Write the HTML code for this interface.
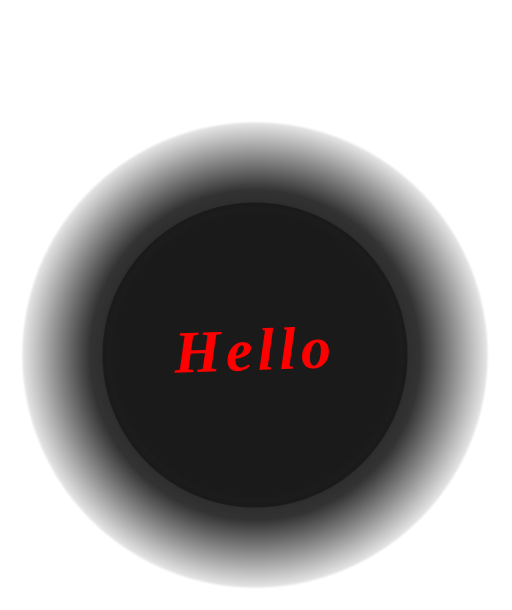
<!DOCTYPE html>
<html><head><style>
html,body{margin:0;padding:0;}
body{width:512px;height:610px;overflow:hidden;background:
radial-gradient(circle at 255px 355px,#1a1a1a 0,#1a1a1a 140px,#1c1c1c 146px,#1a1a1a 152px,#2e2e2e 153px,#333 165px,#5a5a5a 180px,#8a8a8a 198px,#b8b8b8 215px,#e2e2e2 231px,#fff 234px,#fff 100%);
position:relative;font-family:"Liberation Serif",serif;}
.t{position:absolute;left:160px;top:315px;width:190px;text-align:center;color:#f00;font-style:italic;font-weight:bold;font-size:60px;letter-spacing:5px;line-height:70px;transform:rotate(-2deg);}
</style></head><body>
<div class="t">Hello</div>
</body></html>
